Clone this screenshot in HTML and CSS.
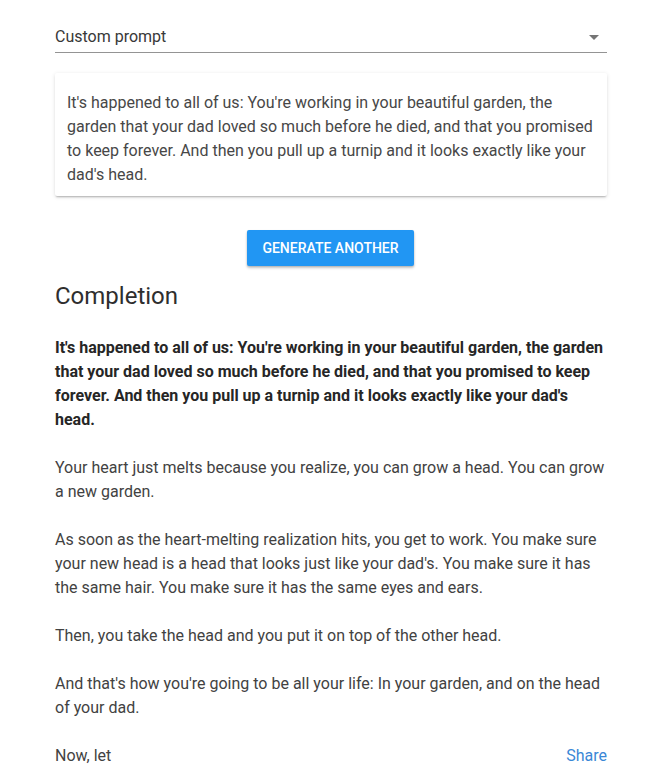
FILE: index.html
```html
<!DOCTYPE html>
<html>
<head>
<meta charset="utf-8">
<link rel="stylesheet" href="styles.css">
</head>
<body>
<main class="page">
  <div class="select">
    <span class="select-label">Custom prompt</span>
    <svg class="select-arrow" width="10" height="5" viewBox="0 0 10 5"><path d="M0 0 L10 0 L5 5 Z" fill="#757575"/></svg>
  </div>
  <div class="card">
    <p class="card-text">It's happened to all of us: You're working in your beautiful garden, the garden that your dad loved so much before he died, and that you promised to keep forever. And then you pull up a turnip and it looks exactly like your dad's head.</p>
  </div>
  <div class="actions">
    <button class="btn">Generate another</button>
  </div>
  <h2 class="heading">Completion</h2>
  <div class="completion">
    <p class="prompt">It's happened to all of us: You're working in your beautiful garden, the garden that your dad loved so much before he died, and that you promised to keep forever. And then you pull up a turnip and it looks exactly like your dad's head.</p>
    <p>Your heart just melts because you realize, you can grow a head. You can grow a new garden.</p>
    <p>As soon as the heart-melting realization hits, you get to work. You make sure your new head is a head that looks just like your dad's. You make sure it has the same hair. You make sure it has the same eyes and ears.</p>
    <p>Then, you take the head and you put it on top of the other head.</p>
    <p>And that's how you're going to be all your life: In your garden, and on the head of your dad.</p>
    <div class="last-row">
      <span>Now, let</span>
      <a class="share" href="#">Share</a>
    </div>
  </div>
</main>
</body>
</html>
```
FILE: styles.css
```css
html, body {
  margin: 0;
  padding: 0;
  background: #ffffff;
}
body {
  font-family: Roboto, "Liberation Sans", sans-serif;
  color: #424242;
  font-size: 16px;
  line-height: 24px;
}
.page {
  width: 552px;
  margin-left: 55px;
  padding-top: 20px;
}
.select {
  display: flex;
  align-items: center;
  justify-content: space-between;
  padding: 5px 0 3px;
  border-bottom: 1px solid #949494;
  color: #383838;
}
.select-arrow {
  margin-right: 8px;
}
.card {
  margin-top: 20px;
  padding: 18px 12px 9px;
  background: #fff;
  border-radius: 2px;
  box-shadow: 0 2px 2px -1px rgba(0,0,0,0.25), 0 1px 4px rgba(0,0,0,0.12);
}
.card-text {
  margin: 0;
  color: #474747;
}
.actions {
  display: flex;
  justify-content: center;
  margin-top: 34px;
  padding-right: 1px;
}
.btn {
  height: 36px;
  width: 167px;
  padding: 0;
  border: none;
  border-radius: 2px;
  background: #2196f3;
  color: #fff;
  font-family: Roboto, "Liberation Sans", sans-serif;
  font-weight: 500;
  font-size: 14px;
  text-transform: uppercase;
  box-shadow: 0 2px 3px rgba(0,0,0,0.2), 0 1px 2px rgba(0,0,0,0.14);
}
.heading {
  margin: 14px 0 0;
  font-size: 24px;
  line-height: 32px;
  font-weight: 400;
  color: #2e2e2e;
}
.completion {
  margin-top: 24px;
}
.completion p {
  margin: 0 0 24px;
}
.completion .prompt {
  font-weight: 700;
  color: #262626;
  margin-bottom: 24px;
}
.last-row {
  display: flex;
  justify-content: space-between;
}
.share {
  color: #3a87d6;
  text-decoration: none;
}
```
